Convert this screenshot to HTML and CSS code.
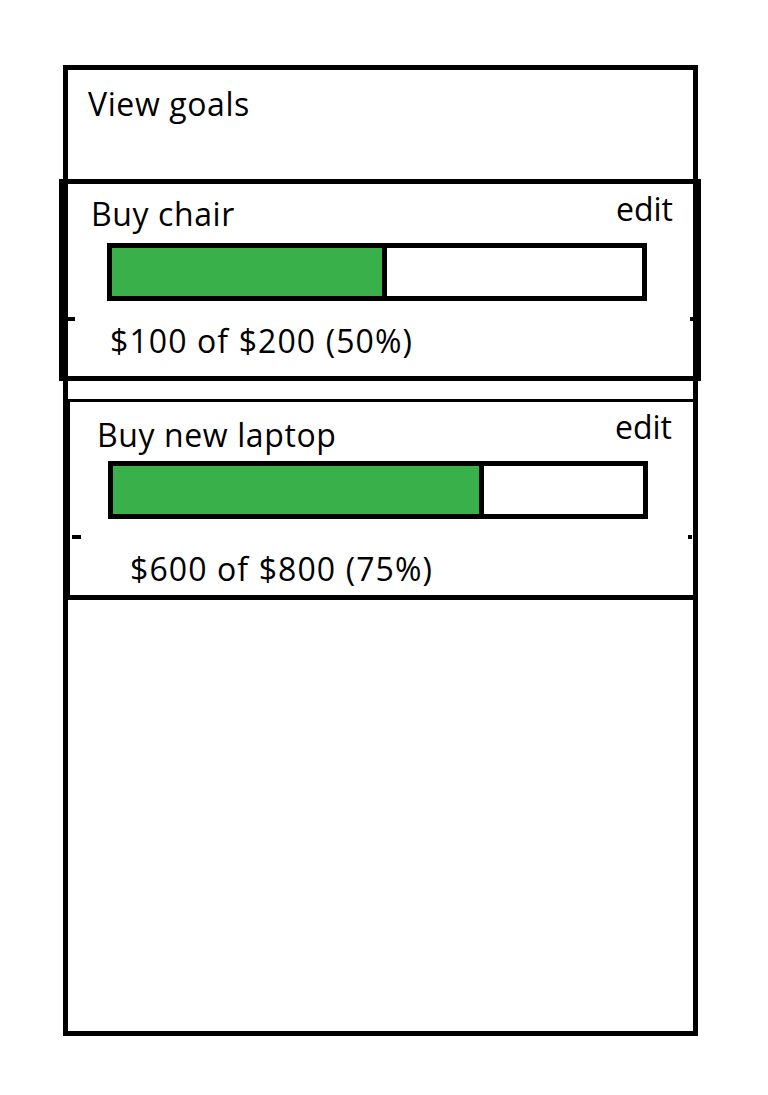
FILE: index.html
```html
<!DOCTYPE html>
<html lang="en">
<head>
    <meta charset="UTF-8">
    <meta name="viewport" content="width=device-width, initial-scale=1.0">
    <title>View goals</title>
    <link rel="stylesheet" href="styles.css">
</head>
<body>

<div class="frame">
    <div class="frame-header">View goals</div>

    <div class="goal goal-first">
        <div class="goal-head">
            <span class="goal-title">Buy chair</span>
            <span class="goal-edit">edit</span>
        </div>
        <div class="progress">
            <div class="progress-fill" style="width: 51%"></div>
        </div>
        <div class="goal-amount">$100 of $200 (50%)</div>
    </div>

    <div class="goal goal-second">
        <div class="goal-head">
            <span class="goal-title">Buy new laptop</span>
            <span class="goal-edit">edit</span>
        </div>
        <div class="progress">
            <div class="progress-fill" style="width: 69%"></div>
        </div>
        <div class="goal-amount">$600 of $800 (75%)</div>
    </div>
</div>

</body>
</html>
```

FILE: styles.css
```css
body {
    font-family: 'Open Sans', 'Noto Sans', sans-serif;
    background-color: #ffffff;
    color: #000000;
    margin: 0;
    padding: 0;
}
.frame {
    box-sizing: border-box;
    width: 635px;
    height: 971px;
    margin: 65px 0 0 63px;
    border: 5px solid #000;
}
.frame-header {
    height: 109px;
    box-sizing: border-box;
    padding: 14px 0 0 20px;
    font-size: 32px;
    line-height: 40px;
    letter-spacing: 0.6px;
}

/* goal cards */
.goal {
    position: relative;
    font-size: 32px;
    line-height: 40px;
}
.goal-head {
    display: flex;
    justify-content: space-between;
    align-items: flex-start;
}
.goal-title {
    padding-top: 5px;
    margin-left: 2px;
    letter-spacing: 0.6px;
}
.goal-amount {
    letter-spacing: 1.1px;
}
.progress {
    box-sizing: border-box;
    width: 540px;
    height: 58px;
    border: 5px solid #000;
    background-color: #fff;
}
.progress-fill {
    height: 100%;
    background-color: #39b04a;
    border-right: 5px solid #000;
}
.goal::before,
.goal::after {
    content: "";
    position: absolute;
    top: 133px;
    height: 4px;
    background-color: #000;
}
.goal::before {
    left: 2px;
    width: 9px;
}
.goal::after {
    right: 2px;
    width: 4px;
}

.goal-first {
    margin: 0 -8px 0 -9px;
    border: 5px solid #000;
    padding: 5px 23px 15px 25px;
}
.goal-first .progress {
    margin: 9px 0 0 18px;
}
.goal-first .goal-amount {
    margin: 20px 0 0 21px;
}

.goal-second {
    margin: 18px -5px 0 -2px;
    border-style: solid;
    border-color: #000;
    border-width: 3px 4px 5px 4px;
    padding: 5px 22px 6px 25px;
}
.goal-second .goal-title {
    padding-top: 8px;
}
.goal-second .progress {
    margin: 6px 0 0 13px;
}
.goal-second .goal-amount {
    margin: 30px 0 0 35px;
}
```
